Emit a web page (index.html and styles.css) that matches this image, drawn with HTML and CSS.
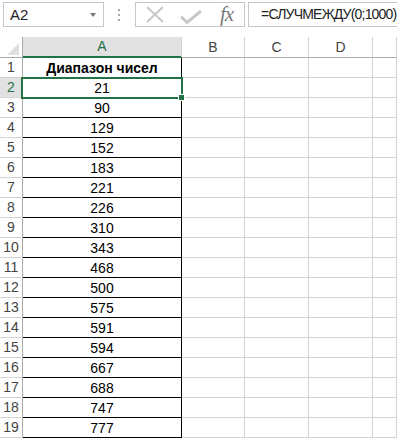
FILE: index.html
```html
<!DOCTYPE html>
<html lang="ru">
<head>
    <meta charset="UTF-8">
    <meta name="viewport" content="width=device-width, initial-scale=1.0">
    <title>СЛУЧМЕЖДУ</title>
    <link rel="stylesheet" href="styles.css">
</head>
<body>
    <div class="formula-bar">
        <div class="name-box">
            <span>A2</span>
            <span class="arrow"></span>
        </div>
        <div class="grip"><i></i><i></i><i></i></div>
        <div class="fx-box">
            <svg class="icon-cancel" width="18" height="17" viewBox="0 0 18 17">
                <path d="M1 1 L17 16 M17 1 L1 16" stroke="#c8c8c8" stroke-width="2" fill="none"/>
            </svg>
            <svg class="icon-enter" width="22" height="14" viewBox="0 0 22 14">
                <path d="M1 6.5 L7 12.5 L21 1" stroke="#c8c8c8" stroke-width="3" fill="none"/>
            </svg>
            <span class="fx">fx</span>
        </div>
        <div class="formula">=СЛУЧМЕЖДУ(0;1000)</div>
    </div>

    <div class="sheet">
        <div class="corner"><span class="tri"></span></div>
        <div class="ch sel">A</div>
        <div class="ch">B</div>
        <div class="ch">C</div>
        <div class="ch">D</div>
        <div class="ch"></div>

        <div class="rh">1</div><div class="c a head">Диапазон чисел</div><div class="c"></div><div class="c"></div><div class="c"></div><div class="c"></div>
        <div class="rh sel">2</div><div class="c a active">21<span class="cursor"><span class="handle"></span></span></div><div class="c"></div><div class="c"></div><div class="c"></div><div class="c"></div>
        <div class="rh">3</div><div class="c a">90</div><div class="c"></div><div class="c"></div><div class="c"></div><div class="c"></div>
        <div class="rh">4</div><div class="c a">129</div><div class="c"></div><div class="c"></div><div class="c"></div><div class="c"></div>
        <div class="rh">5</div><div class="c a">152</div><div class="c"></div><div class="c"></div><div class="c"></div><div class="c"></div>
        <div class="rh">6</div><div class="c a">183</div><div class="c"></div><div class="c"></div><div class="c"></div><div class="c"></div>
        <div class="rh">7</div><div class="c a">221</div><div class="c"></div><div class="c"></div><div class="c"></div><div class="c"></div>
        <div class="rh">8</div><div class="c a">226</div><div class="c"></div><div class="c"></div><div class="c"></div><div class="c"></div>
        <div class="rh">9</div><div class="c a">310</div><div class="c"></div><div class="c"></div><div class="c"></div><div class="c"></div>
        <div class="rh">10</div><div class="c a">343</div><div class="c"></div><div class="c"></div><div class="c"></div><div class="c"></div>
        <div class="rh">11</div><div class="c a">468</div><div class="c"></div><div class="c"></div><div class="c"></div><div class="c"></div>
        <div class="rh">12</div><div class="c a">500</div><div class="c"></div><div class="c"></div><div class="c"></div><div class="c"></div>
        <div class="rh">13</div><div class="c a">575</div><div class="c"></div><div class="c"></div><div class="c"></div><div class="c"></div>
        <div class="rh">14</div><div class="c a">591</div><div class="c"></div><div class="c"></div><div class="c"></div><div class="c"></div>
        <div class="rh">15</div><div class="c a">594</div><div class="c"></div><div class="c"></div><div class="c"></div><div class="c"></div>
        <div class="rh">16</div><div class="c a">667</div><div class="c"></div><div class="c"></div><div class="c"></div><div class="c"></div>
        <div class="rh">17</div><div class="c a">688</div><div class="c"></div><div class="c"></div><div class="c"></div><div class="c"></div>
        <div class="rh">18</div><div class="c a">747</div><div class="c"></div><div class="c"></div><div class="c"></div><div class="c"></div>
        <div class="rh">19</div><div class="c a">777</div><div class="c"></div><div class="c"></div><div class="c"></div><div class="c"></div>
    </div>
</body>
</html>
```

FILE: styles.css
```css
body {
    margin: 0;
    background: #fff;
    font-family: "Liberation Sans", Arial, sans-serif;
    color: #000;
    overflow: hidden;
}

/* formula bar */
.formula-bar {
    display: flex;
    align-items: center;
    height: 25px;
    margin-top: 2px;
    padding-left: 3px;
    overflow: hidden;
    white-space: nowrap;
}
.formula-bar > * {
    flex-shrink: 0;
}
.name-box {
    box-sizing: border-box;
    width: 101px;
    height: 25px;
    border: 1px solid #c6c6c6;
    display: flex;
    align-items: center;
    justify-content: space-between;
    padding: 0 7px 0 6px;
    font-size: 15px;
    color: #222;
}
.arrow {
    width: 0;
    height: 0;
    border-left: 3px solid transparent;
    border-right: 3px solid transparent;
    border-top: 4px solid #777;
}
.grip {
    display: flex;
    flex-direction: column;
    gap: 3px;
    margin-left: 14px;
    margin-right: 15px;
}
.grip i {
    display: block;
    width: 2px;
    height: 2px;
    background: #a6a6a6;
}
.fx-box {
    box-sizing: border-box;
    width: 110px;
    height: 25px;
    border: 1px solid #c6c6c6;
    display: flex;
    align-items: center;
}
.icon-cancel {
    margin-left: 10px;
}
.icon-enter {
    margin-left: 16px;
    margin-top: 4px;
}
.fx {
    margin-left: 18px;
    font-family: "Liberation Serif", "Times New Roman", serif;
    font-style: italic;
    font-size: 21px;
    color: #7a7a7a;
    letter-spacing: -1px;
}
.formula {
    box-sizing: border-box;
    width: 200px;
    height: 25px;
    margin-left: 3px;
    border: 1px solid #c6c6c6;
    border-right: none;
    padding-left: 12px;
    line-height: 23px;
    font-size: 14px;
    letter-spacing: -0.8px;
    color: #222;
}

/* sheet */
.sheet {
    display: grid;
    grid-template-columns: 23px 159px 63px 64px 64px 1fr;
    grid-template-rows: 21px;
    grid-auto-rows: 20px;
    margin-top: 10px;
    font-size: 14px;
}
.sheet > div {
    box-sizing: border-box;
    border-right: 1px solid #d4d4d4;
    border-bottom: 1px solid #d4d4d4;
}
.corner {
    position: relative;
    border-right-color: #ababab !important;
    border-bottom-color: #ababab !important;
}
.tri {
    position: absolute;
    right: 3px;
    bottom: 2px;
    width: 0;
    height: 0;
    border-left: 12px solid transparent;
    border-bottom: 12px solid #dfdfdf;
}
.ch {
    border-bottom-color: #ababab !important;
    text-align: center;
    line-height: 20px;
    color: #444;
}
.ch.sel {
    background: #e1e1e1;
    color: #217346;
    border-bottom: 2px solid #217346 !important;
    line-height: 19px;
}
.rh {
    border-right-color: #ababab !important;
    text-align: center;
    line-height: 19px;
    color: #444;
}
.rh.sel {
    background: #e1e1e1;
    color: #217346;
}
.c {
    line-height: 20px;
}
.sheet > .a {
    border-right-color: #000;
    border-bottom-color: #000;
    text-align: center;
}
.head {
    font-weight: bold;
}
.active {
    position: relative;
}
.cursor {
    position: absolute;
    left: -2px;
    top: -1px;
    right: -2px;
    bottom: -2px;
    border: 2px solid #217346;
}
.handle {
    position: absolute;
    right: -4px;
    bottom: -4px;
    width: 5px;
    height: 5px;
    background: #217346;
    border: 1px solid #fff;
}
```
